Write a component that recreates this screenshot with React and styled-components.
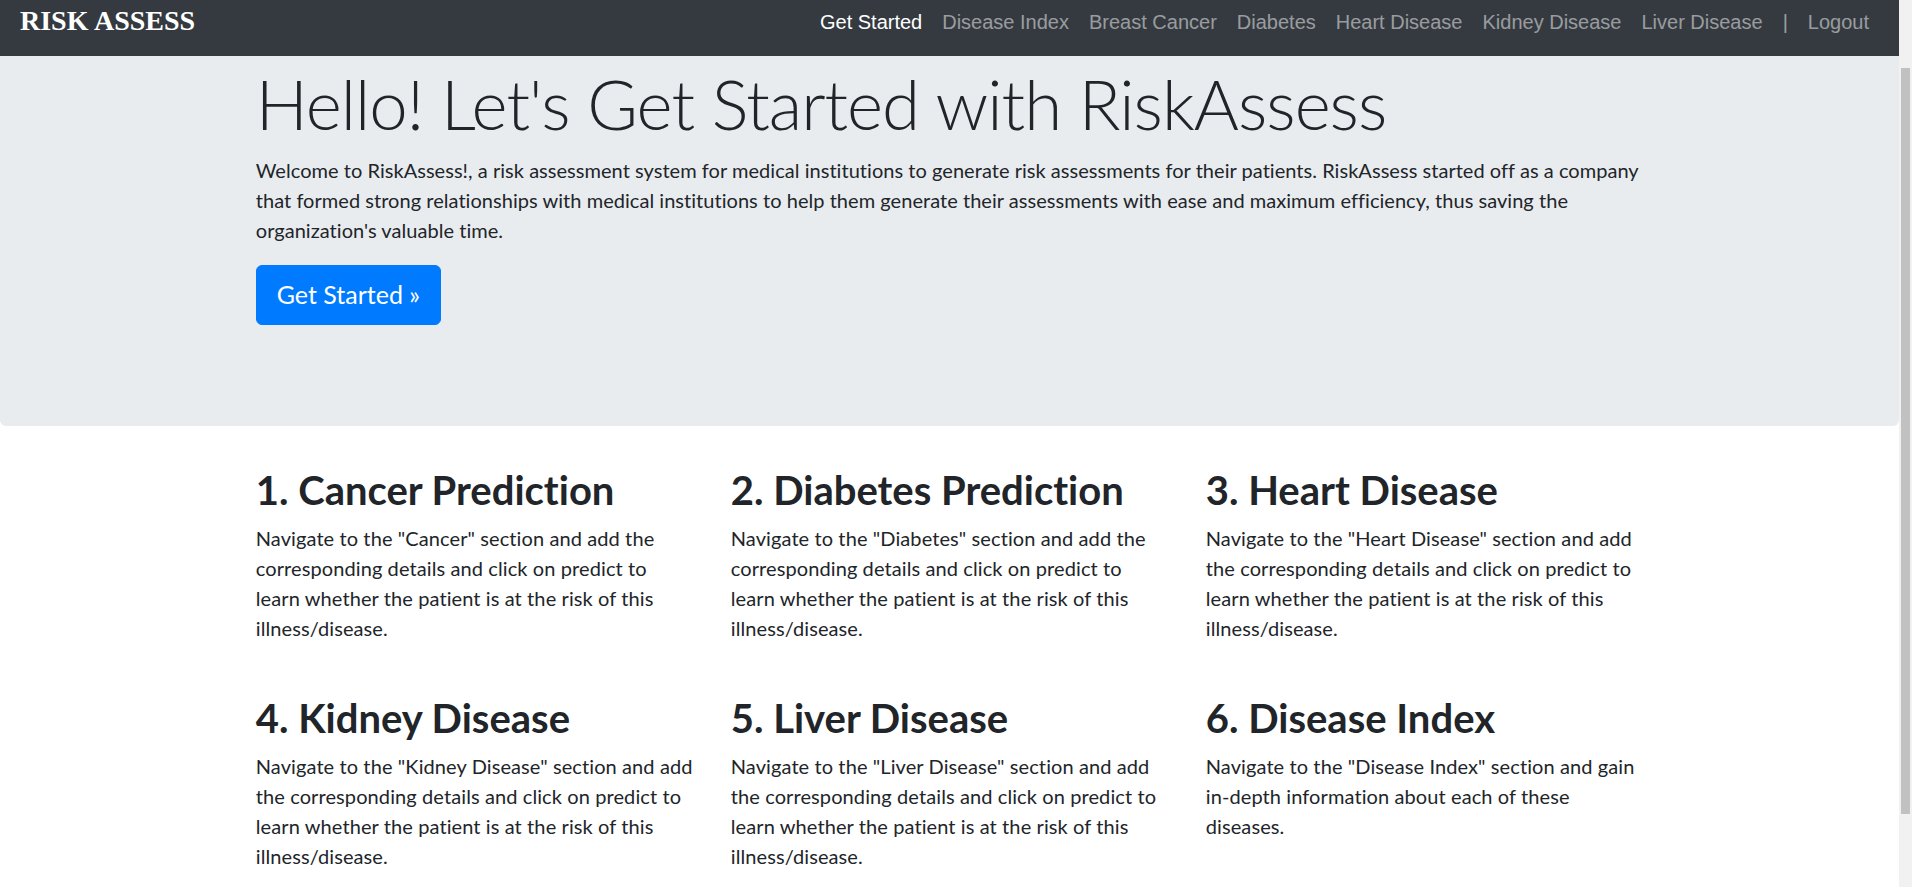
import React from "react";
import styled, { createGlobalStyle } from "styled-components";

const GlobalStyle = createGlobalStyle`
  html, body {
    margin: 0;
    padding: 0;
    background: #fff;
  }
  body {
    font-family: Lato, "Open Sans", sans-serif;
    font-variant-ligatures: none;
    color: #212529;
    font-size: 20px;
    line-height: 1.5;
  }
  * {
    box-sizing: border-box;
  }
`;

const Shell = styled.div`
  display: flex;
  align-items: stretch;
`;

const Page = styled.div`
  flex: 1;
  min-width: 0;
`;

const ScrollTrack = styled.div`
  flex: none;
  width: 13px;
  padding: 68px 2px 0;
  background: #f1f1f1;
`;

const ScrollThumb = styled.div`
  height: 746px;
  background: #c1c1c1;
`;

const Navbar = styled.nav`
  display: flex;
  justify-content: space-between;
  align-items: flex-start;
  height: 56px;
  padding: 0 20px;
  background-color: #343a40;
`;

const Brand = styled.a`
  padding-top: 1px;
  font-family: "Liberation Serif", "Times New Roman", serif;
  font-weight: bold;
  font-size: 28px;
  line-height: 40px;
  color: #fff;
  text-decoration: none;
`;

const NavList = styled.div`
  display: flex;
  align-items: flex-start;
`;

const NavLink = styled.a`
  padding: 7px 10px 0;
  font-family: "Liberation Sans", Arial, sans-serif;
  font-size: 20px;
  line-height: 30px;
  color: ${(p) => (p.$active ? "#fff" : "rgba(255, 255, 255, 0.5)")};
  text-decoration: none;
  cursor: pointer;
`;

const Jumbotron = styled.section`
  padding: 6px 0 81px;
  margin-bottom: 40px;
  background-color: #e9ecef;
  border-radius: 0 0 6px 6px;
`;

const Container = styled.div`
  max-width: 1425px;
  margin: 0 auto;
  padding: 0 18.75px;
`;

const Display = styled.h1`
  margin: 0 0 9px;
  font-size: 69px;
  font-weight: 300;
  line-height: 84px;
  letter-spacing: -1px;
`;

const Lead = styled.p`
  margin: 0 0 20px;
  font-size: 20px;
  line-height: 30px;
  letter-spacing: 0.04px;
  white-space: nowrap;
`;

const ButtonRow = styled.p`
  margin: 0 0 20px;
`;

const PrimaryButton = styled.a`
  display: inline-block;
  padding: 10px 20px;
  font-size: 25px;
  line-height: 37.5px;
  color: #fff;
  background-color: #007bff;
  border: 1px solid #007bff;
  border-radius: 6px;
  text-decoration: none;
  cursor: pointer;
`;

const Row = styled.div`
  display: grid;
  grid-template-columns: repeat(3, 1fr);
  column-gap: 37.5px;
  row-gap: 30px;
  padding-bottom: 120px;
`;

const Card = styled.div`
  min-width: 0;
`;

const CardTitle = styled.h2`
  margin: 0 0 9px;
  font-size: 40px;
  font-weight: 700;
  line-height: 48px;
`;

const CardText = styled.p`
  margin: 0 0 21px;
  font-size: 20px;
  line-height: 30px;
  letter-spacing: 0.1px;
  white-space: nowrap;
`;

const links = [
  "Get Started",
  "Disease Index",
  "Breast Cancer",
  "Diabetes",
  "Heart Disease",
  "Kidney Disease",
  "Liver Disease",
];

const intro = [
  "Welcome to RiskAssess!, a risk assessment system for medical institutions to generate risk assessments for their patients. RiskAssess started off as a company",
  "that formed strong relationships with medical institutions to help them generate their assessments with ease and maximum efficiency, thus saving the",
  "organization's valuable time.",
];

const tail = [
  "learn whether the patient is at the risk of this",
  "illness/disease.",
];

const cards = [
  {
    title: "1. Cancer Prediction",
    lines: [
      'Navigate to the "Cancer" section and add the',
      "corresponding details and click on predict to",
      ...tail,
    ],
  },
  {
    title: "2. Diabetes Prediction",
    lines: [
      'Navigate to the "Diabetes" section and add the',
      "corresponding details and click on predict to",
      ...tail,
    ],
  },
  {
    title: "3. Heart Disease",
    lines: [
      'Navigate to the "Heart Disease" section and add',
      "the corresponding details and click on predict to",
      ...tail,
    ],
  },
  {
    title: "4. Kidney Disease",
    lines: [
      'Navigate to the "Kidney Disease" section and add',
      "the corresponding details and click on predict to",
      ...tail,
    ],
  },
  {
    title: "5. Liver Disease",
    lines: [
      'Navigate to the "Liver Disease" section and add',
      "the corresponding details and click on predict to",
      ...tail,
    ],
  },
  {
    title: "6. Disease Index",
    lines: [
      'Navigate to the "Disease Index" section and gain',
      "in-depth information about each of these",
      "diseases.",
    ],
  },
];

const Lines = ({ lines }) =>
  lines.map((line, i) => (
    <React.Fragment key={i}>
      {line}
      {i < lines.length - 1 && <br />}
    </React.Fragment>
  ));

const App = () => {
  return (
    <Shell>
      <GlobalStyle />
      <Page>
        <Navbar>
          <Brand>RISK ASSESS</Brand>
          <NavList>
            {links.map((l, i) => (
              <NavLink key={l} $active={i === 0}>
                {l}
              </NavLink>
            ))}
            <NavLink as="span">|</NavLink>
            <NavLink>Logout</NavLink>
          </NavList>
        </Navbar>

        <Jumbotron>
          <Container>
            <Display>Hello! Let's Get Started with RiskAssess</Display>
            <Lead>
              <Lines lines={intro} />
            </Lead>
            <ButtonRow>
              <PrimaryButton>Get Started &raquo;</PrimaryButton>
            </ButtonRow>
          </Container>
        </Jumbotron>

        <Container>
          <Row>
            {cards.map((c) => (
              <Card key={c.title}>
                <CardTitle>{c.title}</CardTitle>
                <CardText>
                  <Lines lines={c.lines} />
                </CardText>
              </Card>
            ))}
          </Row>
        </Container>
      </Page>
      <ScrollTrack>
        <ScrollThumb />
      </ScrollTrack>
    </Shell>
  );
};

export default App;
